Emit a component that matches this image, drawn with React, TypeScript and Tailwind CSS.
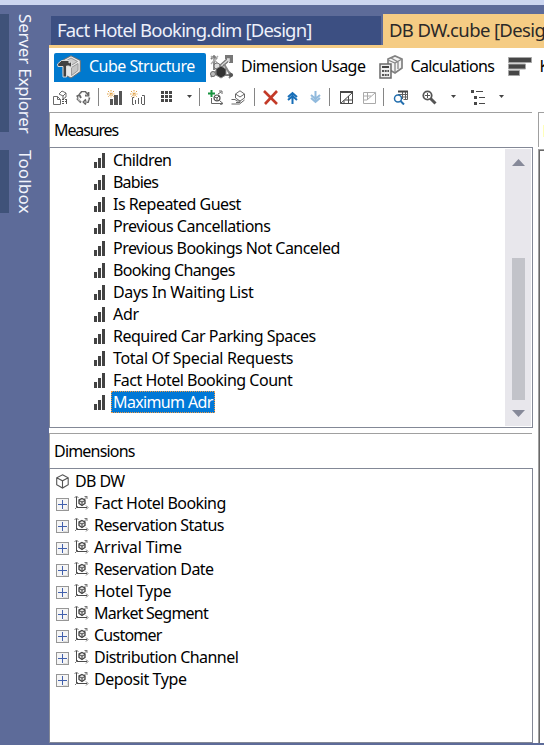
import { useLayoutEffect, useRef, useState } from "react";
import type { ReactNode } from "react";

// Text whose tracking is adjusted so that it spans exactly `width` pixels.
function Label({ text, width, className = "" }: { text: string; width: number; className?: string }) {
  const ref = useRef<HTMLSpanElement>(null);
  const [tracking, setTracking] = useState(0);
  useLayoutEffect(() => {
    if (ref.current) setTracking((width - ref.current.offsetWidth) / text.length);
  }, [text, width]);
  return (
    <span ref={ref} className={`inline-block shrink-0 whitespace-pre ${className}`} style={{ letterSpacing: `${tracking}px` }}>
      {text}
    </span>
  );
}

function Svg({ w, h, box, children, className = "" }: { w: number; h: number; box?: string; children: ReactNode; className?: string }) {
  return (
    <svg width={w} height={h} viewBox={box ?? `0 0 ${w} ${h}`} fill="none" className={`shrink-0 ${className}`}>
      {children}
    </svg>
  );
}

const measures: [string, number][] = [
  ["Children", 58],
  ["Babies", 45],
  ["Is Repeated Guest", 128],
  ["Previous Cancellations", 157],
  ["Previous Bookings Not Canceled", 227],
  ["Booking Changes", 122],
  ["Days In Waiting List", 141],
  ["Adr", 26],
  ["Required Car Parking Spaces", 203],
  ["Total Of Special Requests", 180],
  ["Fact Hotel Booking Count", 179],
  ["Maximum Adr", 100],
];

const dimensions: [string, number][] = [
  ["Fact Hotel Booking", 132],
  ["Reservation Status", 130],
  ["Arrival Time", 88],
  ["Reservation Date", 119],
  ["Hotel Type", 77],
  ["Market Segment", 114],
  ["Customer", 68],
  ["Distribution Channel", 144],
  ["Deposit Type", 93],
];

function BarsIcon() {
  return (
    <Svg w={12} h={15}>
      <path d="M0 9h3v6H0zM4 5h3v10H4zM8 0h3v15H8z" fill="#424242" />
    </Svg>
  );
}

function DimensionIcon() {
  return (
    <Svg w={15} h={15}>
      <path d="M2.5 1.500v11H13" stroke="#4a4a4a" />
      <path d="M.5 3l2-2 2 2M12 10.500l2 2-2 2M1 14l3-3M10.500 4l2.500-2.500M10.500 1.500h2.500V4" stroke="#777" />
      <path d="M8 3.500l3 1.500v3.500L8 10.500 5 8.500V5z" fill="#e8e8e8" stroke="#444" strokeWidth="1.300" />
      <path d="M5 5.500L8 7l3-1.500M8 7v3" stroke="#444" />
    </Svg>
  );
}

function Expander() {
  return (
    <Svg w={13} h={13}>
      <rect x=".5" y=".5" width="12" height="12" fill="#f5f5f5" stroke="#969696" />
      <path d="M7 11.500h4.500V7" stroke="#dedede" />
      <path d="M2 6.500h9M6.500 2v9" stroke="#4160ad" />
    </Svg>
  );
}

function StructureIcon() {
  return (
    <Svg w={24} h={24}>
      <path d="M14 .8L23.300 5.500v11L14 23l-8-4V5z" fill="#e9e9e9" stroke="#707070" />
      <path d="M14 3l6.500 3.500-6.500 4-6-4z" fill="#ccc" stroke="#999" />
      <path d="M14.500 12.500l6.500-4v7l-6.500 5z" fill="#c5c5c5" stroke="#999" />
      <path d="M.5 9l4-3.500h7.500V8l2.500-1.500v6L12 11H9.500v11H6V11.500H1z" fill="#424242" stroke="#dadada" />
    </Svg>
  );
}

function UsageIcon() {
  return (
    <Svg w={24} h={24}>
      <path d="M4 15V2M1 4l3-3 3 3M14 20h8M19 17l3 3-3 3M6 16l-5 6" stroke="#7c7c7c" strokeWidth="1.800" />
      <path d="M1 1l7 8M8 1L1 9" stroke="#aaa" strokeWidth="1.300" />
      <path d="M10 12L20 3M15 2h6v6" stroke="#777" strokeWidth="4" />
      <path d="M11 11l8-7M17 4h2v3" stroke="#ddd" strokeWidth="1.500" />
      <path d="M14 9l7 12" stroke="#888" strokeWidth="2" />
      <circle cx="7" cy="11" r="3" fill="#ddd" stroke="#777" />
      <path d="M6 14l5-3 5 3v6l-5 3-5-3z" fill="#333" stroke="#888" />
      <circle cx="3" cy="19" r="2.500" fill="#bbb" stroke="#666" />
      <circle cx="21" cy="20" r="2" fill="#555" />
    </Svg>
  );
}

function CalculationIcon() {
  return (
    <Svg w={24} h={24}>
      <path d="M9 4l7-3 7 3v9l-7 5-7-4z" fill="#f4f4f4" stroke="#818181" strokeWidth="1.700" />
      <path d="M9 5l7 3 7-4M16 8v9M12 3l7 4v7" stroke="#888" strokeWidth="1.300" />
      <rect x="1" y="9" width="11" height="14" fill="#eee" stroke="#696969" strokeWidth="1.500" />
      <path d="M3 12h7" stroke="#444" strokeWidth="2" />
      <path d="M3 16h7M3 20h7" stroke="#555" strokeWidth="2" strokeDasharray="2 .7" />
    </Svg>
  );
}

function KpiIcon() {
  return (
    <Svg w={25} h={20}>
      <path d="M.5.500h23v5H.500zM.500 7h17v5H.500zM.500 13.500h11v5H.500z" fill="#464646" stroke="#a5a5a5" />
    </Svg>
  );
}

function Toolbar() {
  const dash = "#484848";
  return (
    <div className="flex h-[28px] items-center pl-1">
      <Svg w={15} h={15}>
        <path d="M.5 6.500h4l3 3v5h-7zM4.500 6.500v3h3M6 4l3-3 4 2v4l-3 2M6 4l4 2 3-3M10 6v3" stroke="#6a6a6a" />
        <path d="M9 9.500h4M9 11.500h5M9 13.500h3M13.500 9v5" stroke="#555" strokeDasharray="2 1" />
      </Svg>
      <Svg w={15} h={15} className="ml-2">
        <path d="M3 5l2.500-3h4L12 5.500M9 5.500h3.500V2M13.500 7.500L12 12H8M10 9.500L7.500 12l2.500 2.500M5 12.500L1.500 9 3 5.500M.5 6.500L3.500 5l1.500 3" stroke="#666" strokeWidth="1.800" />
        <path d="M4 5l2-2.500h3l2 3M12.500 8.500L11 12H8M4 11.500L2 9l1-3" stroke="white" strokeWidth=".7" />
      </Svg>
      <i className="ml-[7px] h-[18px] w-px bg-[#858585]" />
      <Svg w={16} h={15} className="ml-2">
        <path d="M4 0v8M0 4h8M1 1l6 6M7 1L1 7" stroke="#e0a043" strokeDasharray="1.500 1" />
        <path d="M3 9h3v6H3zM7 5h4v10H7zM12 1h3v14h-3z" fill="#555" />
      </Svg>
      <Svg w={16} h={15} className="ml-[7px]">
        <path d="M4 0v8M0 4h8M1 1l6 6M7 1L1 7" stroke="#e0a043" strokeDasharray="1.500 1" />
        <path d="M4 7.500H2.500v7H4M12 5.500h2.500v9H12M5.500 10v4M8.500 8v6M11.500 7v7" stroke="#606060" />
      </Svg>
      <Svg w={12} h={12} className="ml-[15px]">
        <path d="M0 0h3v3H0zM4 0h3v3H4zM8 0h3v3H8zM0 4h3v3H0zM4 4h3v3H4zM8 4h3v3H8zM0 8h3v3H0zM4 8h3v3H4zM8 8h3v3H8z" fill={dash} />
      </Svg>
      <Arrow className="ml-[14px]" />
      <i className="ml-[7px] h-[18px] w-px bg-[#858585]" />
      <Svg w={16} h={15} className="ml-2">
        <path d="M3.500 8v5.500h11M12 11l3 2.500-3 1.500M10 4l3-2M11 1h3v3" stroke="#666" />
        <circle cx="9" cy="8" r="3" stroke="#505050" strokeWidth="1.200" />
        <path d="M6.500 7L9 8l2-2M9 8v3" stroke="#505050" />
        <path d="M0 3.500h7M3.500 0v7" stroke="#17933f" strokeWidth="2" />
      </Svg>
      <Svg w={16} h={15} className="ml-[7px]">
        <path d="M4.500 8V4L9 .800 13.500 4v4L9 11 4.500 8M4.500 4L9 7l4.500-3M.500 9.500H4l2 1.500h3v1.500H5M.500 14h8l5-4" stroke="#666" />
      </Svg>
      <i className="ml-[7px] h-[18px] w-px bg-[#858585]" />
      <Svg w={16} h={15} className="ml-2">
        <path d="M1 1l13 13M14 1L2 14" stroke="#c33a28" strokeWidth="2.600" />
      </Svg>
      <Svg w={11} h={13} className="ml-2">
        <path d="M5.500 13V2M1 6l4.500-4L10 6M1 9l4.500-4L10 9" stroke="#176eb8" strokeWidth="2" />
      </Svg>
      <Svg w={11} h={13} className="ml-3">
        <path d="M5.500 0v11M1 7l4.500 4L10 7M1 4l4.500 4L10 4" stroke="#91badd" strokeWidth="2" />
      </Svg>
      <i className="ml-[8px] h-[18px] w-px bg-[#858585]" />
      <Svg w={13} h={13} className="ml-[10px]">
        <path d="M.5 1.500h12v11H.500zM.500 12.500l12-11M5 9h7M8.500 5v7M4 12V9" stroke={dash} />
        <path d="M0 1h13" stroke={dash} strokeWidth="2" />
      </Svg>
      <Svg w={13} h={13} className="ml-[10px]">
        <path d="M.5 1.500h12v11H.500zM4 9l8-7M0 5h8M4.500 1v8M0 9h4" stroke="#aaa" />
      </Svg>
      <i className="ml-[7px] h-[18px] w-px bg-[#858585]" />
      <Svg w={15} h={15} className="ml-[9px]">
        <path d="M5.500 1.500h9v8h-4M5 4.500h9M9.500 2v7M6 7h8M12.500 2v7" stroke="#606060" />
        <path d="M5 1.500h10" stroke="#444" strokeWidth="2" />
        <circle cx="5" cy="8.500" r="3.500" fill="white" stroke="#246fae" strokeWidth="1.500" />
        <path d="M7.500 11l3.500 3.500" stroke="#246fae" strokeWidth="2" />
      </Svg>
      <Svg w={15} h={15} className="ml-[14px]">
        <circle cx="5.500" cy="5.500" r="4.200" stroke="#555" strokeWidth="1.800" />
        <path d="M3 5.500h5M5.500 3v5" stroke="#555" />
        <path d="M8.500 8.500l5 5" stroke="#555" strokeWidth="3" />
      </Svg>
      <Arrow className="ml-[14px]" />
      <Svg w={14} h={15} className="ml-[15px]">
        <path d="M0 0h3v3H0zM3 6h3v3H3zM3 12h3v3H3z" fill={dash} />
        <path d="M5 1.500h7M8 7.500h6M8 13.500h6" stroke={dash} />
      </Svg>
      <Arrow className="ml-[14px]" />
    </div>
  );
}

function Arrow({ className = "" }: { className?: string }) {
  return (
    <Svg w={5} h={3} className={`mb-[2px] ${className}`}>
      <path d="M0 0h5L2.500 3z" fill="#444" />
    </Svg>
  );
}

function PaneHeader({ text, width }: { text: string; width: number }) {
  return (
    <div className="h-[35px] w-[483px] shrink-0 border-t border-l border-[#a0a0a0] pt-[6px] pl-1">
      <Label text={text} width={width} />
    </div>
  );
}

export default function App() {
  return (
    <div className="h-[745px] w-[544px] overflow-hidden border-t-[5px] border-[#ccd6f0] bg-[#5d6b99] font-['Noto_Sans','Open_Sans',sans-serif] text-[16px] leading-[22px] text-black">
      <div className="flex h-[740px]">
        <aside className="w-[49px] shrink-0 pt-[9px] text-[17px] leading-[28px] text-[#f2f4fc]">
          <div className="flex h-[118px] border-l-[9px] border-[#3f5279] pl-[2px] [writing-mode:vertical-rl]">
            <Vertical text="Server Explorer" length={119} />
          </div>
          <div className="mt-[18px] flex h-[63px] border-l-[9px] border-[#3f5279] pl-[2px] [writing-mode:vertical-rl]">
            <Vertical text="Toolbox" length={64} />
          </div>
        </aside>

        <main className="flex min-w-0 flex-1 flex-col">
          <div className="flex h-[43px] shrink-0 items-end border-b-[3px] border-[#f5cc84] pl-[2px] text-[18.5px] leading-[28px]">
            <div className="h-[29px] w-[330px] shrink-0 bg-[#3c4f82] pl-[6px] text-[#edf0fa]">
              <Label text="Fact Hotel Booking.dim [Design]" width={255} />
            </div>
            <div className="ml-[2px] h-[31px] w-[161px] shrink-0 overflow-hidden bg-[#f5cc84] pt-[2px] pl-[6px] text-[#2b2929]">
              <Label text="DB DW.cube [Design]" width={172} />
            </div>
          </div>

          <div className="flex h-[695px] shrink-0 flex-col bg-white">
            <nav className="flex h-[35px] shrink-0 overflow-hidden pt-[5px] pl-[5px]">
              <div className="flex h-[29px] w-[152px] shrink-0 items-center rounded-t-[2px] bg-[#0079ce] pb-[2px] pl-[3px] text-white">
                <StructureIcon />
                <Label text="Cube Structure" width={106} className="ml-2 pb-px" />
              </div>
              <div className="flex h-[29px] shrink-0 items-center pb-[2px] pl-1">
                <UsageIcon />
                <Label text="Dimension Usage" width={124} className="ml-[7px] pb-px" />
                <div className="w-[14px]" />
                <CalculationIcon />
                <Label text="Calculations" width={84} className="ml-[7px] pb-px" />
                <div className="w-[14px]" />
                <KpiIcon />
                <Label text="KPIs" width={31} className="ml-[6px] pb-px" />
              </div>
            </nav>
            <div className="h-[29px] shrink-0"><Toolbar /></div>

            <div className="flex h-[631px]">
              <div className="flex w-[484px] shrink-0 flex-col">
                <PaneHeader text="Measures" width={64} />
                <section className="flex h-[281px] shrink-0 justify-between border border-[#838896] p-px pl-0">
                  <div>
                    {measures.map(([name, width]) => (
                      <div key={name} className="flex h-[22px] items-center pl-[44px]">
                        <BarsIcon />
                        {name === "Maximum Adr" ? (
                          <div className="ml-[5px] h-[22px] border border-dotted border-[#f29a42] bg-[#0078d7] px-px leading-[20px] text-white">
                            <Label text={name} width={width} />
                          </div>
                        ) : (
                          <Label text={name} width={width} className="ml-[7px]" />
                        )}
                      </div>
                    ))}
                  </div>
                  <div className="flex w-[26px] flex-col items-center bg-[#e8e7ec] pt-[10px]">
                    <Svg w={13} h={7}>
                      <path d="M0 7L6.500 0 13 7z" fill="#868999" />
                    </Svg>
                    <div className="mt-[92px] h-[142px] w-[13px] bg-[#c2c3c9]" />
                    <Svg w={13} h={7} className="mt-[10px]">
                      <path d="M0 0h13L6.500 7z" fill="#868999" />
                    </Svg>
                  </div>
                </section>
                <div className="h-[5px]" />
                <PaneHeader text="Dimensions" width={81} />
                <section className="h-[275px] shrink-0 border border-[#838896] pt-px">
                  <div className="flex h-[22px] items-center pl-[6px]">
                    <Svg w={13} h={15}>
                      <path d="M6.500.800l5.700 3v7L6.500 14 .700 10.800v-7zM.700 3.800l5.800 3 5.700-3M6.500 7v7" stroke="#555" strokeWidth="1.100" />
                    </Svg>
                    <Label text="DB DW" width={50} className="ml-[6px]" />
                  </div>
                  {dimensions.map(([name, width]) => (
                    <div key={name} className="flex h-[22px] items-center pl-[6px]">
                      <div className="pt-[3px]"><Expander /></div>
                      <div className="ml-[5px] pb-px"><DimensionIcon /></div>
                      <Label text={name} width={width} className="ml-[5px]" />
                    </div>
                  ))}
                </section>
              </div>
              <div className="ml-[5px] flex min-w-0 flex-1 flex-col">
                <div className="flex h-[35px] justify-end border-t border-l border-[#a0a0a0] pt-[12px]">
                  <div className="h-[12px] w-px bg-[#ffffba]" />
                </div>
                <div className="mt-[2px] min-h-0 flex-1 border-t border-l border-[#a0a0a0]">
                  <div className="h-full border-t border-l border-[#696969]" />
                </div>
              </div>
            </div>
          </div>
        </main>
      </div>
    </div>
  );
}

// Sidebar caption, read from top to bottom.
function Vertical({ text, length }: { text: string; length: number }) {
  const ref = useRef<HTMLSpanElement>(null);
  const [tracking, setTracking] = useState(0);
  useLayoutEffect(() => {
    if (ref.current) setTracking((length - ref.current.offsetHeight) / text.length);
  }, [text, length]);
  return (
    <div className="flex w-[28px] items-start whitespace-pre">
      <span ref={ref} className="inline-block shrink-0" style={{ letterSpacing: `${tracking}px` }}>{text}</span>
    </div>
  );
}
